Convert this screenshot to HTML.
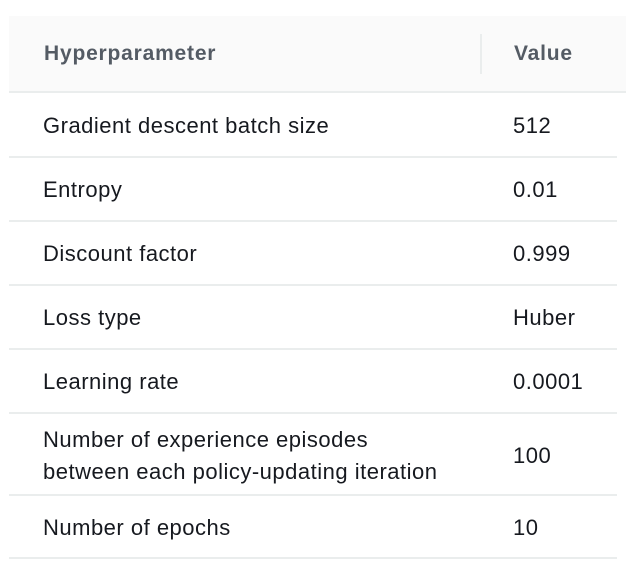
<!DOCTYPE html>
<html><head><meta charset="utf-8"><style>
body{margin:0;width:626px;height:576px;background:#fff;font-family:"Liberation Sans",Arial,sans-serif;position:relative;overflow:hidden}
.hdr{position:absolute;left:9px;top:16px;width:617px;height:75px;background:#fafafa;border-bottom:2px solid #eaeded}
.sep{position:absolute;left:480px;top:34px;width:2px;height:40px;background:#eaeded}
.t{position:absolute;font-size:22px;letter-spacing:0.5px;color:#16191f;white-space:nowrap;line-height:32px}
.h{font-weight:bold;color:#545b64;font-size:21px;letter-spacing:0.8px}
.l{position:absolute;left:9px;width:608px;height:2px;background:#eaeded}
</style></head><body>
<div class="hdr"></div><div class="sep"></div>
<div class="t h" style="left:44px;top:38px">Hyperparameter</div>
<div class="t h" style="left:514px;top:38px">Value</div>

<div class="t" style="left:43px;top:110px">Gradient descent batch size</div><div class="t" style="left:513px;top:110px">512</div>
<div class="l" style="top:156px"></div>
<div class="t" style="left:43px;top:174px">Entropy</div><div class="t" style="left:513px;top:174px">0.01</div>
<div class="l" style="top:220px"></div>
<div class="t" style="left:43px;top:238px">Discount factor</div><div class="t" style="left:513px;top:238px">0.999</div>
<div class="l" style="top:284px"></div>
<div class="t" style="left:43px;top:302px">Loss type</div><div class="t" style="left:513px;top:302px">Huber</div>
<div class="l" style="top:348px"></div>
<div class="t" style="left:43px;top:366px">Learning rate</div><div class="t" style="left:513px;top:366px">0.0001</div>
<div class="l" style="top:412px"></div>
<div class="t" style="left:43px;top:424px">Number of experience episodes</div>
<div class="t" style="left:43px;top:456px">between each policy-updating iteration</div>
<div class="t" style="left:513px;top:440px">100</div>
<div class="l" style="top:494px"></div>
<div class="t" style="left:43px;top:512px">Number of epochs</div><div class="t" style="left:513px;top:512px">10</div>
<div class="l" style="top:557px"></div>
</body></html>
